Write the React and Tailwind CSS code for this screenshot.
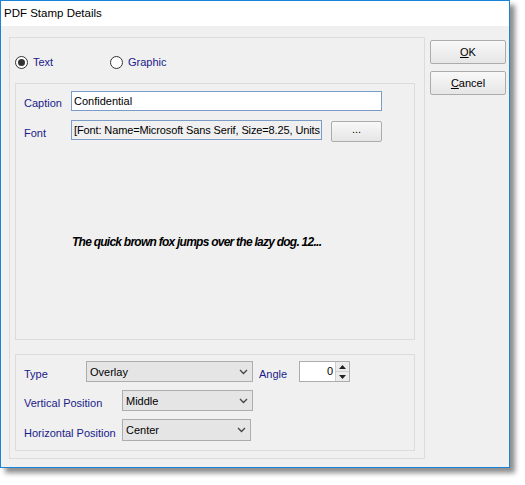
import React from "react";

const Chevron = () => (
	<svg width="9" height="6" viewBox="0 0 9 6" className="shrink-0">
		<polyline points="1,1 4.5,4.5 8,1" fill="none" stroke="#444" strokeWidth="1.3" />
	</svg>
);

const Select = ({ value, className }) => (
	<div
		className={`flex items-center justify-between bg-[#e5e5e5] border border-[#adadad] pl-[3px] pr-[4px] text-[11px] text-black ${className}`}>
		<span className="pt-[1px]">{value}</span>
		<Chevron />
	</div>
);

const Radio = ({ checked, label, className }) => (
	<div className={`flex items-center gap-[5px] ${className}`}>
		<div className="w-[13px] h-[13px] rounded-full border border-[#333] bg-white flex items-center justify-center">
			{checked && <div className="w-[7px] h-[7px] rounded-full bg-[#333]" />}
		</div>
		<span className="text-[11px] text-[#1a1a8a]">{label}</span>
	</div>
);

const Button = ({ children, className }) => (
	<div
		className={`flex items-center justify-center border border-[#acacac] rounded-[2px] bg-gradient-to-b from-[#f8f8f8] to-[#e6e6e6] text-[11px] text-black ${className}`}>
		{children}
	</div>
);

export default function App() {
	return (
		<div className="w-[525px] h-[485px] bg-white font-['Liberation_Sans',Arial,sans-serif]">
			<div className="w-[510px] h-[468px] border border-[#1883d7] bg-[#f0f0f0] flex flex-col shadow-[5px_5px_5px_rgba(0,0,0,0.45)]">
				{/* title bar */}
				<div className="h-[25px] bg-white flex items-center pl-[3px] text-[11.5px] text-black">
					PDF Stamp Details
				</div>

				<div className="flex-1 flex pl-[8px] pt-[11px]">
					{/* main group */}
					<div className="w-[416px] h-[422px] border border-[#dcdcdc] px-[5px] flex flex-col">
						<div className="mt-[17px] h-[14px] flex items-center">
							<Radio checked label="Text" className="w-[95px]" />
							<Radio label="Graphic" />
						</div>

						<div className="mt-[14px] w-[400px] h-[257px] border border-[#dcdcdc] pt-[7px] flex flex-col">
							<div className="flex items-center h-[20px]">
								<span className="pl-[8px] w-[55px] text-[11px] text-[#1a1a8a] mt-[4px]">Caption</span>
								<div className="w-[311px] h-[20px] bg-white border border-[#7a9cc6] flex items-center pl-[2px] pt-[1px] text-[11px] text-black">
									Confidential
								</div>
							</div>
							<div className="flex items-start mt-[9px]">
								<span className="pl-[8px] w-[55px] h-[20px] flex items-center text-[11px] text-[#1a1a8a] mt-[3px]">Font</span>
								<div className="w-[251px] h-[20px] bg-[#f0f0f0] border border-[#7a9cc6] flex items-center pl-[2px] pt-[1px] text-[11px] tracking-[-0.12px] text-black overflow-hidden whitespace-nowrap">
									[Font: Name=Microsoft Sans Serif, Size=8.25, Units
								</div>
								<Button className="ml-[9px] mt-[1px] w-[51px] h-[21px] pb-[4px]">...</Button>
							</div>
							<div className="mt-[90px] pl-[56px] text-[12px] font-bold italic tracking-[-0.75px] text-black">
								The quick brown fox jumps over the lazy dog. 12...
							</div>
						</div>

						<div className="mt-[14px] w-[400px] h-[97px] border border-[#dcdcdc] pt-[6px] flex flex-col">
							<div className="flex items-center h-[21px]">
								<span className="pl-[8px] w-[70px] text-[11px] text-[#1a1a8a] mt-[5px]">Type</span>
								<Select value="Overlay" className="w-[167px] h-[21px]" />
								<span className="ml-[6px] w-[40px] text-[11px] text-[#1a1a8a] mt-[5px]">Angle</span>
								<div className="w-[51px] h-[21px] bg-white border border-[#acacac] flex items-center justify-end">
									<span className="text-[11px] text-black pr-[2px]">0</span>
									<div className="w-[14px] h-full flex flex-col border-l border-[#cfcfcf]">
										<div className="flex-1 flex items-center justify-center bg-[#ececec] border-b border-[#cfcfcf]">
											<svg width="7" height="4" viewBox="0 0 7 4">
												<polygon points="0,4 7,4 3.5,0" fill="#222" />
											</svg>
										</div>
										<div className="flex-1 flex items-center justify-center bg-[#ececec]">
											<svg width="7" height="4" viewBox="0 0 7 4">
												<polygon points="0,0 7,0 3.5,4" fill="#222" />
											</svg>
										</div>
									</div>
								</div>
							</div>
							<div className="flex items-center h-[21px] mt-[8px]">
								<span className="pl-[8px] w-[106px] text-[11px] text-[#1a1a8a] mt-[5px]">Vertical Position</span>
								<Select value="Middle" className="w-[131px] h-[21px]" />
							</div>
							<div className="flex items-center h-[22px] mt-[8px]">
								<span className="pl-[8px] w-[106px] text-[11px] text-[#1a1a8a] mt-[6px]">Horizontal Position</span>
								<Select value="Center" className="w-[129px] h-[22px]" />
							</div>
						</div>
					</div>

					{/* buttons */}
					<div className="ml-[5px] mt-[3px] flex flex-col gap-[7px]">
						<Button className="w-[76px] h-[24px]">
							<span><span className="underline">O</span>K</span>
						</Button>
						<Button className="w-[76px] h-[24px]">
							<span><span className="underline">C</span>ancel</span>
						</Button>
					</div>
				</div>
			</div>
		</div>
	);
}
